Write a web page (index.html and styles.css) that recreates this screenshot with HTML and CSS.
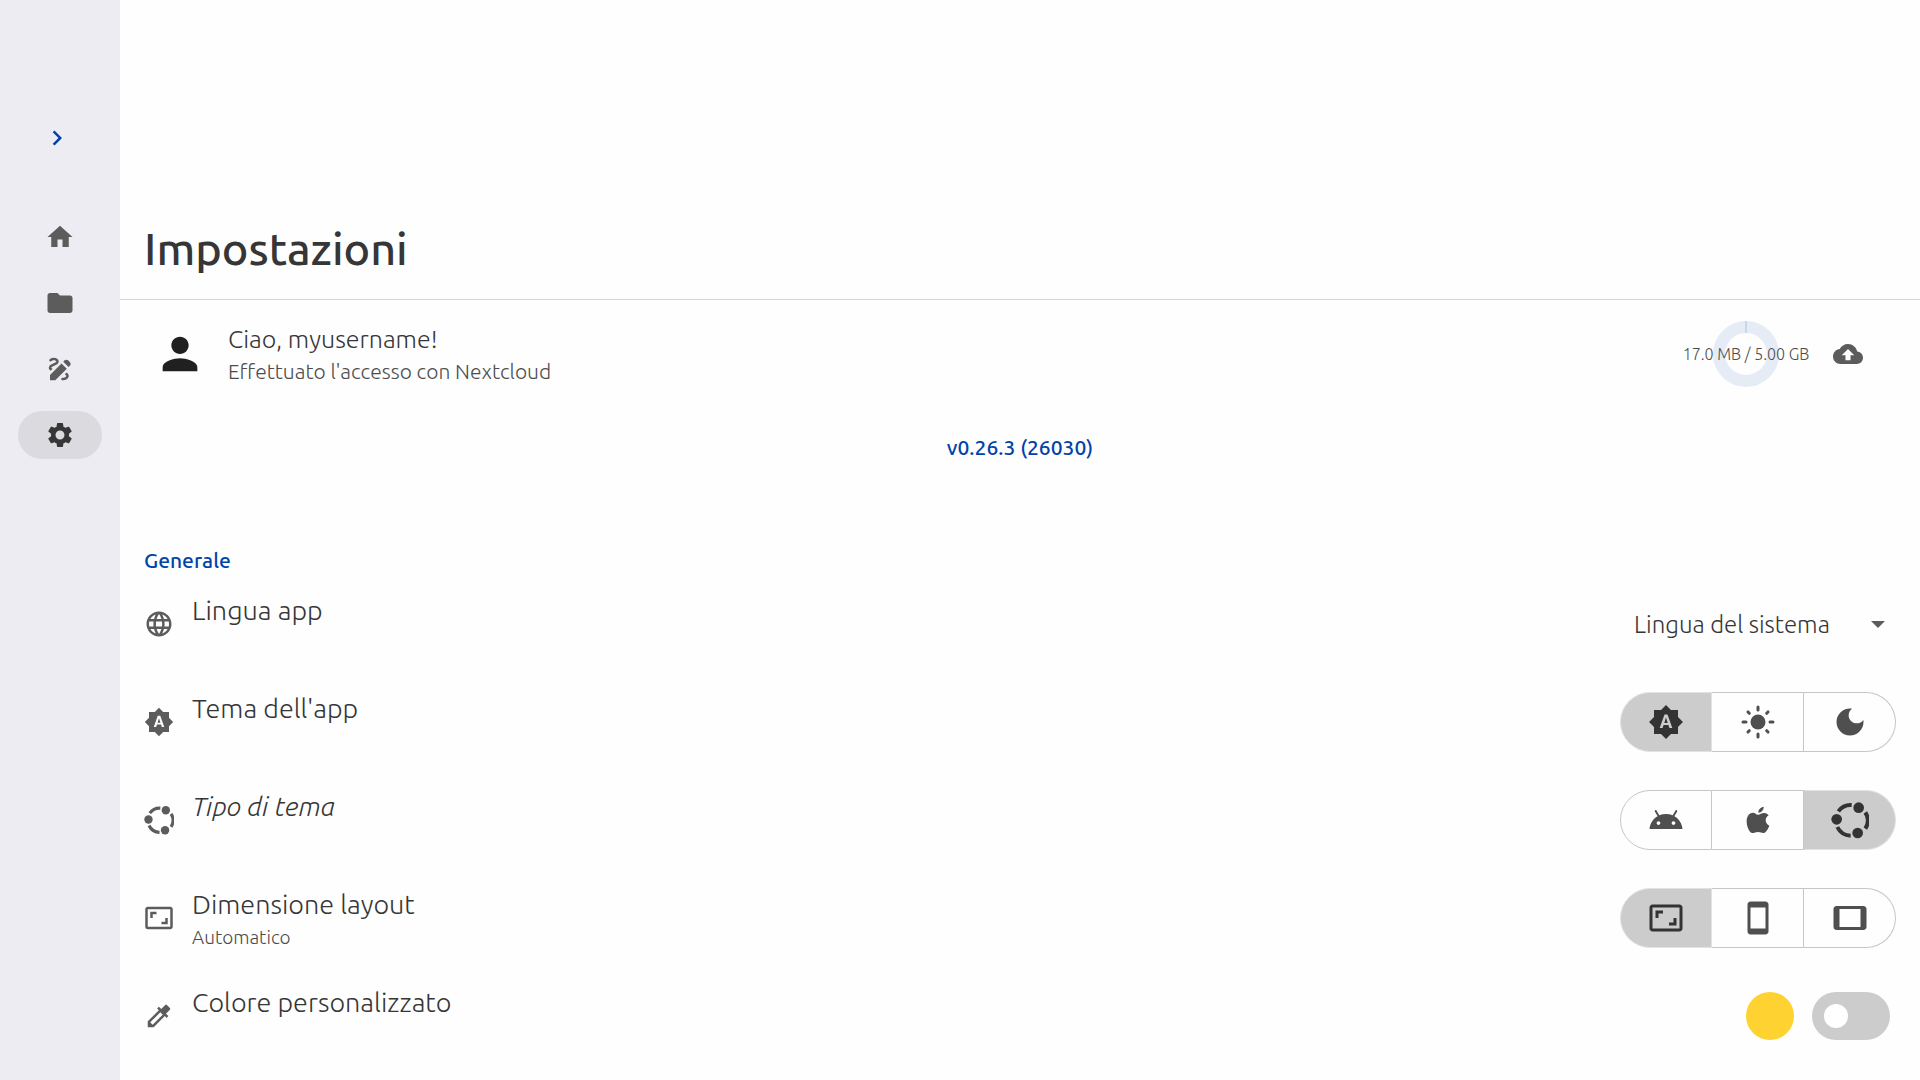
FILE: index.html
```html
<!DOCTYPE html>
<html lang="it">
<head>
    <meta charset="UTF-8">
    <meta name="viewport" content="width=device-width, initial-scale=1.0">
    <title>Impostazioni</title>
    <link rel="stylesheet" href="styles.css">
</head>
<body>
    <!-- Shared icons -->
    <svg class="icon-defs" aria-hidden="true">
        <symbol id="icon-auto" viewBox="0 0 24 24"><path d="M10.85 12.65h2.3L12 9l-1.15 3.65zM20 8.69V4h-4.69L12 .69 8.69 4H4v4.69L.69 12 4 15.31V20h4.69L12 23.31 15.31 20H20v-4.69L23.31 12 20 8.69zM14.3 16l-.7-2h-3.2l-.7 2H7.8L11 7h2l3.2 9h-1.9z"/></symbol>
        <symbol id="icon-aspect" viewBox="0 0 24 24"><path d="M19 12h-2v3h-3v2h5v-5zM7 9h3V7H5v5h2V9zm14-6H3c-1.1 0-2 .9-2 2v14c0 1.1.9 2 2 2h18c1.1 0 2-.9 2-2V5c0-1.1-.9-2-2-2zm0 16.01H3V4.99h18v14.02z"/></symbol>
        <symbol id="icon-ubuntu" viewBox="0 0 114 114">
            <circle cx="17" cy="55" r="16"/>
            <circle cx="83" cy="20" r="16"/>
            <circle cx="80" cy="96" r="16"/>
            <path d="M22 31A46 46 0 0 1 62 12M103 34A46 46 0 0 1 103 83M59 104A46 46 0 0 1 19 78" fill="none" stroke="currentColor" stroke-width="12"/>
        </symbol>
    </svg>

    <nav class="sidebar" aria-label="Navigazione">
        <button class="expand" type="button" aria-label="Espandi">
            <svg class="icon" viewBox="0 0 24 24"><path d="M10 6L8.59 7.41 13.17 12l-4.58 4.59L10 18l6-6z"/></svg>
        </button>
        <a class="nav-item" href="#home" aria-label="Home">
            <svg class="icon" viewBox="0 0 24 24"><path d="M10 20v-6h4v6h5v-8h3L12 3 2 12h3v8z"/></svg>
        </a>
        <a class="nav-item" href="#browse" aria-label="Sfoglia">
            <svg class="icon" viewBox="0 0 24 24"><path d="M10 4H4c-1.1 0-2 .9-2 2v12c0 1.1.9 2 2 2h16c1.1 0 2-.9 2-2V8c0-1.1-.9-2-2-2h-8z"/></svg>
        </a>
        <a class="nav-item" href="#whiteboard" aria-label="Lavagna">
            <svg class="icon" viewBox="0 0 24 24"><path d="M18.85 10.39l1.06-1.06c.78-.78.78-2.05 0-2.83L18.5 5.09c-.78-.78-2.05-.78-2.83 0l-1.06 1.06 4.24 4.24zM13.19 7.56L4 16.76V21h4.24l9.19-9.19-4.24-4.25zM19 17.5c0 2.19-2.54 3.5-5 3.5-.55 0-1-.45-1-1s.45-1 1-1c1.54 0 3-.73 3-1.5 0-.47-.48-.87-1.23-1.2l1.48-1.48c1.07.63 1.75 1.47 1.75 2.68zM4.58 13.35C3.61 12.79 3 12.06 3 11c0-1.8 1.89-2.63 3.56-3.36C7.59 7.18 9 6.56 9 6c0-.41-.78-1-2-1-1.26 0-1.8.61-1.83.64-.35.41-.98.46-1.4.12-.41-.34-.49-.95-.15-1.38C3.73 4.24 4.76 3 7 3s4 1.32 4 3c0 1.87-1.93 2.72-3.64 3.47C6.42 9.88 5 10.5 5 11c0 .31.43.6 1.07.86l-1.49 1.49z"/></svg>
        </a>
        <a class="nav-item active" href="#settings" aria-label="Impostazioni" aria-current="page">
            <svg class="icon" viewBox="0 0 24 24"><path d="M19.14 12.94c.04-.3.06-.61.06-.94 0-.32-.02-.64-.07-.94l2.03-1.58c.18-.14.23-.41.12-.61l-1.92-3.32c-.12-.22-.37-.29-.59-.22l-2.39.96c-.5-.38-1.03-.7-1.62-.94l-.36-2.54c-.04-.24-.24-.41-.48-.41h-3.84c-.24 0-.43.17-.47.41l-.36 2.54c-.59.24-1.13.57-1.62.94l-2.39-.96c-.22-.08-.47 0-.59.22L2.74 8.87c-.12.21-.08.47.12.61l2.03 1.58c-.05.3-.09.63-.09.94s.02.64.07.94l-2.03 1.58c-.18.14-.23.41-.12.61l1.92 3.32c.12.22.37.29.59.22l2.39-.96c.5.38 1.03.7 1.62.94l.36 2.54c.05.24.24.41.48.41h3.84c.24 0 .44-.17.47-.41l.36-2.54c.59-.24 1.13-.56 1.62-.94l2.39.96c.22.08.47 0 .59-.22l1.92-3.32c.12-.22.07-.47-.12-.61l-2.01-1.58zM12 15.6c-1.98 0-3.6-1.62-3.6-3.6s1.62-3.6 3.6-3.6 3.6 1.62 3.6 3.6-1.62 3.6-3.6 3.6z"/></svg>
        </a>
    </nav>

    <main class="content">
        <header class="page-header">
            <h1>Impostazioni</h1>
        </header>

        <section class="profile">
            <svg class="avatar" viewBox="0 0 24 24"><path d="M12 12c2.21 0 4-1.79 4-4s-1.79-4-4-4-4 1.79-4 4 1.79 4 4 4zm0 2c-2.67 0-8 1.34-8 4v2h16v-2c0-2.66-5.33-4-8-4z"/></svg>
            <div class="profile-text">
                <p class="profile-name">Ciao, myusername!</p>
                <p class="profile-status">Effettuato l'accesso con Nextcloud</p>
            </div>
            <div class="storage">
                <svg class="ring" viewBox="0 0 66 66">
                    <circle cx="33" cy="33" r="27" fill="none" stroke="#e6ecf6" stroke-width="12"/>
                    <path d="M33 0v12" stroke="#a9c1e6" stroke-width="1"/>
                </svg>
                <span class="storage-text">17.0 MB / 5.00 GB</span>
            </div>
            <button class="upload" type="button" aria-label="Sincronizza">
                <svg class="icon" viewBox="0 0 24 24"><path d="M19.35 10.04C18.67 6.59 15.64 4 12 4 9.11 4 6.6 5.64 5.35 8.04 2.34 8.36 0 10.91 0 14c0 3.31 2.69 6 6 6h13c2.76 0 5-2.24 5-5 0-2.64-2.05-4.78-4.65-4.96zM14 13v4h-4v-4H7l5-5 5 5h-3z"/></svg>
            </button>
        </section>

        <div class="version">
            <a href="#version">v0.26.3 (26030)</a>
        </div>

        <section class="settings">
            <h2>Generale</h2>

            <div class="setting">
                <svg class="icon" viewBox="0 0 24 24"><path d="M11.99 2C6.47 2 2 6.48 2 12s4.47 10 9.99 10C17.52 22 22 17.52 22 12S17.52 2 11.99 2zm6.93 6h-2.95c-.32-1.25-.78-2.45-1.38-3.56 1.84.63 3.37 1.91 4.33 3.56zM12 4.04c.83 1.2 1.48 2.53 1.91 3.96h-3.82c.43-1.43 1.08-2.76 1.91-3.96zM4.26 14C4.1 13.36 4 12.69 4 12s.1-1.36.26-2h3.38c-.08.66-.14 1.32-.14 2s.06 1.34.14 2H4.26zm.82 2h2.95c.32 1.25.78 2.45 1.38 3.56-1.84-.63-3.37-1.9-4.33-3.56zm2.95-8H5.08c.96-1.66 2.49-2.93 4.33-3.56C8.81 5.55 8.35 6.75 8.03 8zM12 19.96c-.83-1.2-1.48-2.53-1.91-3.96h3.82c-.43 1.43-1.08 2.76-1.91 3.96zM14.34 14H9.66c-.09-.66-.16-1.32-.16-2s.07-1.35.16-2h4.68c.09.65.16 1.32.16 2s-.07 1.34-.16 2zm.25 5.56c.6-1.11 1.06-2.31 1.38-3.56h2.95c-.96 1.65-2.49 2.93-4.33 3.56zM16.36 14c.08-.66.14-1.32.14-2s-.06-1.34-.14-2h3.38c.16.64.26 1.31.26 2s-.1 1.36-.26 2h-3.38z"/></svg>
                <div class="setting-text">
                    <label class="setting-title" for="language">Lingua app</label>
                </div>
                <div class="dropdown">
                    <select id="language">
                        <option>Lingua del sistema</option>
                    </select>
                    <svg class="dropdown-arrow" viewBox="0 0 14 7"><path d="M0 0h14L7 7z"/></svg>
                </div>
            </div>

            <div class="setting">
                <svg class="icon"><use href="#icon-auto"/></svg>
                <div class="setting-text">
                    <span class="setting-title" id="theme-label">Tema dell'app</span>
                </div>
                <div class="toggle-group" role="radiogroup" aria-labelledby="theme-label">
                    <label><input type="radio" name="theme" aria-label="Sistema" checked>
                        <svg class="icon"><use href="#icon-auto"/></svg>
                    </label>
                    <label><input type="radio" name="theme" aria-label="Chiaro">
                        <svg class="icon" viewBox="0 0 24 24"><circle cx="12" cy="12" r="5"/><path d="M12 2v2M12 20v2M2 12h2M20 12h2M5.3 5.3l.9.9M17.8 17.8l.9.9M5.3 18.7l.9-.9M17.8 6.2l.9-.9" fill="none" stroke="currentColor" stroke-width="2" stroke-linecap="round"/></svg>
                    </label>
                    <label><input type="radio" name="theme" aria-label="Scuro">
                        <svg class="icon" viewBox="0 0 24 24"><path d="M12 3c-4.97 0-9 4.03-9 9s4.03 9 9 9 9-4.03 9-9c0-.46-.04-.92-.1-1.36-.98 1.37-2.58 2.26-4.4 2.26-2.98 0-5.4-2.42-5.4-5.4 0-1.81.89-3.42 2.26-4.4C12.92 3.04 12.46 3 12 3z"/></svg>
                    </label>
                </div>
            </div>

            <div class="setting">
                <svg class="icon"><use href="#icon-ubuntu"/></svg>
                <div class="setting-text">
                    <span class="setting-title changed" id="platform-label">Tipo di tema</span>
                </div>
                <div class="toggle-group" role="radiogroup" aria-labelledby="platform-label">
                    <label><input type="radio" name="platform" aria-label="Android">
                        <svg class="icon" viewBox="0 0 24 24"><path d="M17.6 9.48l1.84-3.18c.16-.31.04-.69-.26-.85-.29-.15-.65-.06-.83.22l-1.88 3.24c-2.86-1.21-6.08-1.21-8.94 0L5.65 5.67c-.19-.29-.58-.38-.87-.2-.28.18-.37.54-.22.83L6.4 9.48C3.3 11.25 1.28 14.44 1 18h22c-.28-3.56-2.3-6.75-5.4-8.52zM7 15.25c-.69 0-1.25-.56-1.25-1.25s.56-1.25 1.25-1.25 1.25.56 1.25 1.25-.56 1.25-1.25 1.25zm10 0c-.69 0-1.25-.56-1.25-1.25s.56-1.25 1.25-1.25 1.25.56 1.25 1.25-.56 1.25-1.25 1.25z"/></svg>
                    </label>
                    <label><input type="radio" name="platform" aria-label="Apple">
                        <svg class="icon" viewBox="0 0 108 108"><path d="M54 38c6 0 12-6 20-5 5 0 9 3 12 7-6 4-9 9-9 15 0 8 5 13 11 16-3 8-8 17-14 21-6 3-11-2-20-2-8 0-13 4-18 3-9-2-17-22-16-38 1-14 9-23 19-23 6 0 10 6 15 6zM55 32c0-9 7-17 16-18 1 8-6 18-16 18z"/></svg>
                    </label>
                    <label><input type="radio" name="platform" aria-label="Linux" checked>
                        <svg class="icon icon-wide"><use href="#icon-ubuntu"/></svg>
                    </label>
                </div>
            </div>

            <div class="setting">
                <svg class="icon"><use href="#icon-aspect"/></svg>
                <div class="setting-text">
                    <span class="setting-title" id="layout-label">Dimensione layout</span>
                    <span class="setting-subtitle">Automatico</span>
                </div>
                <div class="toggle-group" role="radiogroup" aria-labelledby="layout-label">
                    <label><input type="radio" name="layout" aria-label="Automatico" checked>
                        <svg class="icon"><use href="#icon-aspect"/></svg>
                    </label>
                    <label><input type="radio" name="layout" aria-label="Telefono">
                        <svg class="icon" viewBox="0 0 24 24"><path d="M17 1H7c-1.1 0-2 .9-2 2v18c0 1.1.9 2 2 2h10c1.1 0 2-.9 2-2V3c0-1.1-.9-2-2-2zm0 18H7V5h10v14z"/></svg>
                    </label>
                    <label><input type="radio" name="layout" aria-label="Tablet">
                        <svg class="icon" viewBox="0 0 24 24"><path d="M21 4H3c-1.1 0-2 .9-2 2v12c0 1.1.9 2 2 2h18c1.1 0 2-.9 2-2V6c0-1.1-.9-2-2-2zm-2 14H5V6h14v12z"/></svg>
                    </label>
                </div>
            </div>

            <div class="setting">
                <svg class="icon" viewBox="0 0 24 24"><path d="M20.71 5.63l-2.34-2.34c-.39-.39-1.02-.39-1.41 0l-3.12 3.12-1.93-1.91-1.41 1.41 1.42 1.42L3 16.25V21h4.75l8.92-8.92 1.42 1.42 1.41-1.41-1.92-1.92 3.12-3.12c.4-.4.4-1.03.01-1.42zM6.92 19L5 17.08l8.06-8.06 1.92 1.92L6.92 19z"/></svg>
                <div class="setting-text">
                    <label class="setting-title" for="custom-color">Colore personalizzato</label>
                </div>
                <div class="color-controls">
                    <button class="swatch" type="button" aria-label="Scegli colore"></button>
                    <input class="switch" id="custom-color" type="checkbox">
                </div>
            </div>
        </section>
    </main>
</body>
</html>
```
FILE: styles.css
```css
* {
    box-sizing: border-box;
}

body {
    display: flex;
    min-height: 100vh;
    margin: 0;
    font-family: "Ubuntu", "Open Sans", sans-serif;
    font-weight: 300;
    color: #363636;
    background-color: #fefefe;
}

h1, h2, p {
    margin: 0;
}

button {
    padding: 0;
    border: none;
    background: none;
    color: inherit;
    cursor: pointer;
}

.icon-defs {
    display: none;
}

.icon {
    flex: none;
    display: block;
    width: 30px;
    height: 30px;
    fill: currentColor;
    color: #5c5c5c;
}

/* Sidebar */
.sidebar {
    flex: none;
    display: flex;
    flex-direction: column;
    align-items: center;
    gap: 18px;
    width: 120px;
    padding-top: 108px;
    background-color: #edecf3;
}

.expand {
    display: flex;
    align-items: center;
    width: 66px;
    height: 60px;
    margin-bottom: 27px;
    padding-left: 15px;
}

.expand .icon {
    color: #0043a8;
}

.nav-item {
    display: flex;
    align-items: center;
    justify-content: center;
    width: 84px;
    height: 48px;
    border-radius: 24px;
}

.nav-item.active {
    background-color: #dadadf;
}

.nav-item.active .icon {
    color: #363636;
}

/* Main area */
.content {
    flex: 1;
    min-width: 0;
}

.page-header {
    padding: 215px 24px 16px;
    border-bottom: 1px solid #d4d4d4;
}

h1 {
    font-size: 45px;
    line-height: 68px;
    font-weight: 500;
}

.profile {
    display: flex;
    align-items: center;
    padding: 21px 57px 21px 34px;
}

.avatar {
    flex: none;
    width: 52px;
    height: 52px;
    margin-right: 22px;
    fill: #202020;
}

.profile-text {
    flex: 1;
    padding-bottom: 2px;
}

.profile-name {
    font-size: 25px;
    line-height: 36px;
}

.profile-status {
    font-size: 21px;
    line-height: 28px;
    color: #4c4c4c;
}

.storage {
    display: grid;
    place-items: center;
    min-width: 132px;
    margin-right: 21px;
}

.ring,
.storage-text {
    grid-area: 1 / 1;
}

.ring {
    width: 66px;
    height: 66px;
}

.storage-text {
    z-index: 1;
    font-size: 16px;
    color: #4c4c4c;
}

.version {
    padding: 24px 0 83px;
    text-align: center;
}

.version a {
    font-size: 21px;
    line-height: 30px;
    font-weight: 500;
    color: #0043a8;
    text-decoration: none;
}

/* Settings list */
h2 {
    padding: 0 24px;
    font-size: 21px;
    line-height: 30px;
    font-weight: 500;
    color: #0043a8;
}

.setting {
    display: flex;
    align-items: center;
    gap: 18px;
    height: 98px;
    padding: 0 24px;
}

.setting-text {
    flex: 1;
    display: flex;
    flex-direction: column;
    height: 66px;
}

.setting-title {
    font-size: 27px;
    line-height: 38px;
}

.setting-title.changed {
    font-style: italic;
}

.setting-subtitle {
    font-size: 19px;
    line-height: 28px;
    color: #4c4c4c;
}

.dropdown {
    display: grid;
    align-items: center;
    width: 276px;
}

.dropdown select,
.dropdown-arrow {
    grid-area: 1 / 1;
}

.dropdown select {
    appearance: none;
    width: 100%;
    height: 60px;
    padding: 0 48px 0 14px;
    border: none;
    background: none;
    font: inherit;
    font-size: 24px;
    color: #363636;
}

.dropdown-arrow {
    justify-self: end;
    width: 14px;
    height: 7px;
    margin-right: 11px;
    fill: #5c5c5c;
    pointer-events: none;
}

.toggle-group {
    display: flex;
    height: 60px;
}

.toggle-group label {
    display: flex;
    align-items: center;
    justify-content: center;
    width: 92px;
    border: 1px solid #c6c6c6;
    border-left-width: 0;
    cursor: pointer;
}

.toggle-group label:first-child {
    border-left-width: 1px;
    border-radius: 30px 0 0 30px;
}

.toggle-group label:last-child {
    border-radius: 0 30px 30px 0;
}

.toggle-group label:has(input:checked) {
    border-color: #e2e2e2;
    background-color: #ccc;
}

.toggle-group input {
    appearance: none;
    width: 0;
    height: 0;
    margin: 0;
}

.toggle-group .icon {
    width: 36px;
    height: 36px;
    color: #4f4f4f;
}

.toggle-group .icon-wide {
    width: 38px;
    height: 38px;
}

.toggle-group input:checked + .icon {
    color: #333;
}

.color-controls {
    display: flex;
    gap: 18px;
    padding-right: 6px;
}

.swatch {
    width: 48px;
    height: 48px;
    border-radius: 50%;
    background-color: #fed230;
}

.switch {
    appearance: none;
    display: flex;
    align-items: center;
    width: 78px;
    height: 48px;
    margin: 0;
    padding: 0 12px;
    border-radius: 24px;
    background-color: #ccc;
    cursor: pointer;
}

.switch::before {
    content: "";
    width: 24px;
    height: 24px;
    border-radius: 50%;
    background-color: #fff;
}

.switch:checked {
    justify-content: flex-end;
    background-color: #0043a8;
}
```
